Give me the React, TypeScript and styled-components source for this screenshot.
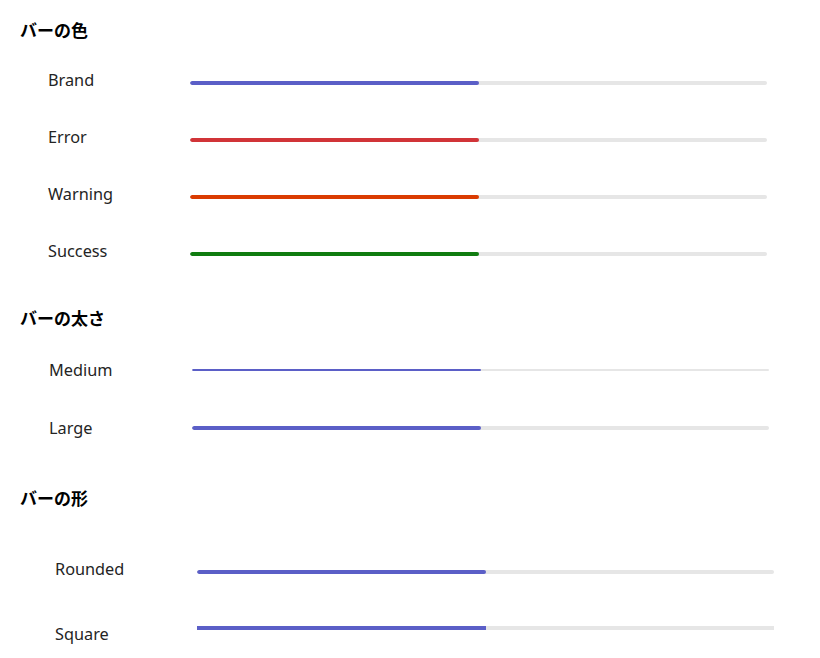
import styled, { createGlobalStyle } from "styled-components";

const GlobalStyle = createGlobalStyle`
  html, body {
    margin: 0;
    padding: 0;
    background: #ffffff;
  }
  body {
    font-family: "Noto Sans", "Noto Sans CJK JP", sans-serif;
    color: #242424;
  }
`;

const Page = styled.div`
  display: flex;
  flex-direction: column;
  padding: 19px 0 0 20px;
  width: 820px;
  height: 658px;
  box-sizing: border-box;
`;

const Section = styled.section<{ $top: number }>`
  display: flex;
  flex-direction: column;
  margin-top: ${p => p.$top}px;
`;

const Heading = styled.h2<{ $gap: number }>`
  margin: 0 0 ${p => p.$gap}px 0;
  font-family: "Noto Sans CJK JP", sans-serif;
  font-size: 17px;
  line-height: 22px;
  font-weight: 700;
  color: #000000;
`;

const Row = styled.div<{ $height: number }>`
  display: flex;
  align-items: center;
  height: ${p => p.$height}px;
`;

const Label = styled.span<{ $indent: number; $width: number }>`
  width: ${p => p.$width}px;
  padding-left: ${p => p.$indent}px;
  box-sizing: border-box;
  font-size: 16.3px;
  line-height: 20px;
  color: #242424;
`;

// $shift moves the bar's centre away from the label's centre, in px
const Track = styled.div<{ $thickness: number; $square?: boolean; $shift: number }>`
  width: 577px;
  height: ${p => p.$thickness}px;
  background: #e6e6e6;
  border-radius: ${p => (p.$square ? "0" : "9999px")};
  overflow: hidden;
  margin-top: ${p => (p.$shift > 0 ? p.$shift * 2 : 0)}px;
  margin-bottom: ${p => (p.$shift < 0 ? -p.$shift * 2 : 0)}px;
`;

const Fill = styled.div<{ $color: string; $square?: boolean }>`
  height: 100%;
  background: ${p => p.$color};
  border-radius: ${p => (p.$square ? "0" : "9999px")};
`;

type Bar = {
  label: string;
  color?: string;
  thickness?: number;
  square?: boolean;
  shift?: number;
  height?: number;
};

const BRAND = "#5b5fc7";

const colorBars: Bar[] = [
  { label: "Brand", color: BRAND },
  { label: "Error", color: "#d13438" },
  { label: "Warning", color: "#da3b01" },
  { label: "Success", color: "#107c10" },
];

const thicknessBars: Bar[] = [
  { label: "Medium", thickness: 2, shift: 0, height: 58 },
  { label: "Large", thickness: 4, shift: 0, height: 58 },
];

const shapeBars: Bar[] = [
  { label: "Rounded", shift: 3, height: 65 },
  { label: "Square", square: true, shift: -6, height: 65 },
];

const BarRow = ({ bar, indent, labelWidth }: { bar: Bar; indent: number; labelWidth: number }) => (
  <Row $height={bar.height ?? 57}>
    <Label $indent={indent} $width={labelWidth}>
      {bar.label}
    </Label>
    <Track $thickness={bar.thickness ?? 4} $square={bar.square} $shift={bar.shift ?? 3.5}>
      <Fill $color={bar.color ?? BRAND} $square={bar.square} style={{ width: "50%" }} />
    </Track>
  </Row>
);

export default function App() {
  return (
    <>
      <GlobalStyle />
      <Page>
        <Section $top={0}>
          <Heading $gap={10}>バーの色</Heading>
          {colorBars.map(b => (
            <BarRow key={b.label} bar={b} indent={28} labelWidth={170} />
          ))}
        </Section>
        <Section $top={28}>
          <Heading $gap={12}>バーの太さ</Heading>
          {thicknessBars.map(b => (
            <BarRow key={b.label} bar={b} indent={29} labelWidth={172} />
          ))}
        </Section>
        <Section $top={30}>
          <Heading $gap={27}>バーの形</Heading>
          {shapeBars.map(b => (
            <BarRow key={b.label} bar={b} indent={35} labelWidth={177} />
          ))}
        </Section>
      </Page>
    </>
  );
}
